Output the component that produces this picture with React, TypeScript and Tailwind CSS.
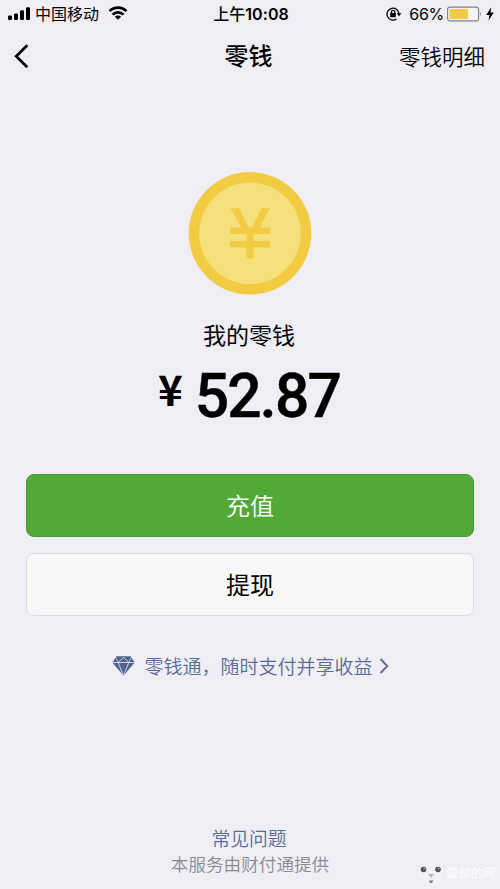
import React from "react";

const cjk = "font-['Noto_Sans_CJK_SC',sans-serif]";

function StatusBar() {
  return (
    <div className="flex h-[28px] items-center pl-2 pr-[6px] text-black">
      <div className="flex flex-1 items-center">
        <svg width="23" height="14" viewBox="0 0 23 14">
          <rect x="0" y="8.5" width="4" height="4.5" rx="1.2" />
          <rect x="6" y="6.5" width="4" height="6.5" rx="1.2" />
          <rect x="12" y="3.3" width="4" height="9.7" rx="1.2" />
          <rect x="18" y="0.3" width="4" height="12.7" rx="1.2" />
        </svg>
        <span className="-mt-[2px] ml-1 text-[16px] leading-[28px]">中国移动</span>
        <svg className="-mt-[2px] ml-[9px]" width="20" height="14" viewBox="0 0 19 14" fill="none" stroke="#000" strokeWidth="2.7">
          <path d="M1 5.1 A12 12 0 0 1 18 5.1" />
          <path d="M4 8.6 A7.8 7.8 0 0 1 15 8.6" />
          <path d="M9.5 13.8 L6.4 10.8 A4.4 4.4 0 0 1 12.6 10.8 Z" fill="#000" stroke="none" />
        </svg>
      </div>
      <div className="-mt-[2px] text-[16px] font-medium leading-[28px]">
        上午<span className="font-['Inter',sans-serif] font-semibold tracking-[0.1px]">10:08</span>
      </div>
      <div className="flex flex-1 items-center justify-end">
        <svg className="translate-x-px" width="16" height="14" viewBox="0 0 16 14" fill="none" stroke="#000" strokeWidth="1.3">
          <path d="M10.5 12 A6 6 0 1 1 13 7" />
          <path d="M10.6 6.3 H15.4 L13 9.2 Z" fill="#000" stroke="none" />
          <rect x="4.2" y="6" width="5.6" height="4.2" fill="#000" stroke="none" />
          <path d="M5.4 6.5 V5 A1.7 1.7 0 0 1 8.8 5 V6.5" />
        </svg>
        <span className="-mt-px ml-2 font-['Inter',sans-serif] text-[16px] leading-[28px] tracking-[-0.3px]">66%</span>
        <svg className="-mt-px ml-1 -translate-x-px" width="36" height="16" viewBox="0 0 36 16">
          <rect x="0.6" y="1.1" width="31" height="13.8" rx="2.5" fill="#f4f4f8" stroke="#7f8086" strokeWidth="1.1" />
          <rect x="2.5" y="3" width="18.5" height="10" fill="#f2ca45" />
          <path d="M33 5.5 Q34.8 8 33 10.5 Z" fill="#7f8086" />
        </svg>
        <svg className="-mt-px ml-[2px]" width="8" height="14" viewBox="0 0 8 14">
          <path d="M5.2 0.2 L0.2 8 H3.5 L2.5 13.5 L7.8 5.4 H4.5 Z" />
        </svg>
      </div>
    </div>
  );
}

function NavBar() {
  return (
    <div className="flex h-[55px] items-center pl-[14px] pr-[15px] text-black">
      <div className="flex-1">
        <svg width="16" height="24" viewBox="0 0 16 24" fill="none" stroke="#000" strokeWidth="2.7">
          <path d="M13.3 1.3 L2.2 12.3 L13.3 23.3" />
        </svg>
      </div>
      <h1 className="-mt-[2px] -translate-x-px text-[24px] font-medium leading-[36px]">零钱</h1>
      <div className="flex-1 text-right text-[21.5px] font-[350] leading-[36px]">零钱明细</div>
    </div>
  );
}

function Coin() {
  return (
    <svg className="mt-[88px]" width="124" height="124" viewBox="0 0 124 124">
      <circle cx="62" cy="62.3" r="61.3" fill="#f1cb42" />
      <circle cx="62" cy="62.3" r="50.8" fill="#f5e07b" />
      <g fill="#f1cb42">
        <path d="M42.5 37 H51 L60.5 56.5 H64 L73.5 37 H82 L71 57.5 H53.5 Z" />
        <rect x="42" y="56.5" width="40" height="6.5" />
        <rect x="42" y="70" width="40" height="6.5" />
        <rect x="58.5" y="56.5" width="7" height="31" />
      </g>
    </svg>
  );
}

function Gem() {
  return (
    <svg className="translate-x-px" width="23" height="20" viewBox="0 0 23 20">
      <path d="M4.5 0.3 H18.5 L22.7 6.5 L11.5 19.8 L0.3 6.5 Z" fill="#4f638e" />
      <path d="M0.5 6.5 H22.5 M6.2 6.5 L11.5 1.2 L16.8 6.5 M6.2 6.5 L11.2 19 M16.8 6.5 L11.8 19" fill="none" stroke="#efeef5" strokeWidth="0.8" />
      <path d="M3.8 1.5 L6.2 6.5 M19.2 1.5 L16.8 6.5" stroke="#efeef5" strokeWidth="0.6" />
    </svg>
  );
}

function Watermark() {
  return (
    <div className="absolute bottom-[3px] right-[4px] flex items-center">
      <svg width="28" height="26" viewBox="0 0 28 26">
        <ellipse cx="13" cy="14" rx="12" ry="10" fill="#f2f2f6" />
        <circle cx="5.5" cy="9.5" r="2.8" fill="#55534f" />
        <circle cx="20" cy="9.5" r="2.8" fill="#55534f" />
        <circle cx="6.2" cy="8.8" r="0.7" fill="#ddd" />
        <circle cx="20.7" cy="8.8" r="0.7" fill="#ddd" />
        <path d="M10 14 H16 L13 18 Z" fill="#b9b9b9" />
        <path d="M10.8 20.5 H15.2 L14 23 H12 Z" fill="#77777a" />
      </svg>
      <span className="text-[12.5px] font-bold leading-[24px] text-[#fafafc]">爱部的网</span>
    </div>
  );
}

export default function App() {
  return (
    <div className={`relative flex h-[889px] w-[500px] flex-col overflow-hidden bg-[#efeef5] ${cjk}`}>
      <StatusBar />
      <NavBar />
      <main className="flex flex-1 flex-col items-center">
        <Coin />
        <div className="mt-[21px] -translate-x-px text-[23px] leading-[36px] text-black">我的零钱</div>
        <div className="mt-[8px] flex h-[72px] items-start text-black">
          <span className="mt-[4px] text-[42px] font-bold leading-[48px]">¥</span>
          <span className="mt-px ml-[12px] mr-[2px] font-['Roboto',sans-serif] text-[60.5px] font-medium leading-[72px] tracking-[-1.8px] [-webkit-text-stroke:0.5px_#000]">52.87</span>
        </div>
        <div className="mt-[42px] flex w-full flex-col gap-4 px-[26px]">
          <button className="h-[63px] rounded-[8px] border border-[#479a32] bg-[#52a938] pb-[2px] text-[24px] font-[350] text-white">充值</button>
          <button className="h-[63px] rounded-[8px] border border-[#dddde1] bg-[#f8f8f8] pb-[2px] text-[24px] text-black">提现</button>
        </div>
        <div className="mt-[34px] flex items-center text-[#5a6c94]">
          <Gem />
          <span className="ml-[10px] text-[19px] font-[350] leading-[32px]">零钱通，随时支付并享收益</span>
          <svg className="ml-[6px]" width="10" height="16" viewBox="0 0 10 16" fill="none" stroke="currentColor" strokeWidth="1.8">
            <path d="M1.5 1 L8.3 8 L1.5 15" />
          </svg>
        </div>
      </main>
      <footer className="flex flex-col items-center pb-[12px]">
        <div className="-translate-x-px text-[18.8px] font-[350] leading-[26px] text-[#5a6c94]">常见问题</div>
        <div className="text-[17.6px] font-[350] leading-[26px] text-[#8b8b8e]">本服务由财付通提供</div>
      </footer>
      <Watermark />
    </div>
  );
}
